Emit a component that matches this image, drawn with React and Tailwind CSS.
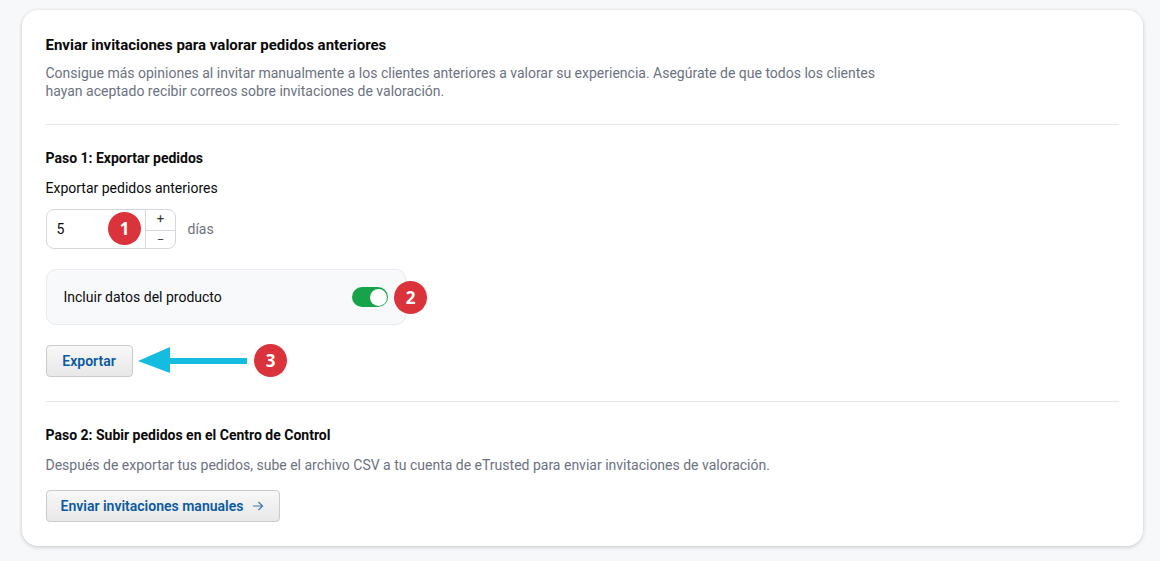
import React from "react";

const Badge = ({ n, className = "" }) => (
  <span className={"absolute flex h-[33px] w-[33px] items-center justify-center rounded-full bg-[#da333b] font-['Open_Sans',sans-serif] text-[17px] font-bold leading-none text-white " + className}>{n}</span>
);

export default function App() {
  return (
    <div className="h-[561px] w-[1160px] overflow-hidden bg-[#f7f8fa] pl-[22px] pt-[10px] font-['Roboto',sans-serif] text-[14px]">
      <div className="h-[536px] w-[1121px] rounded-[16px] bg-white px-[24px] pt-[26px] shadow-[0_1px_4px_rgba(0,0,0,0.2)]">
        <h2 className="ml-[-0.5px] text-[15px] font-bold leading-[18px] text-[#0a0a0a]">Enviar invitaciones para valorar pedidos anteriores</h2>
        <p className="ml-[-0.5px] mt-[10px] w-[850px] text-[14px] leading-[18px] text-[#6c7280]">
          Consigue más opiniones al invitar manualmente a los clientes anteriores a valorar su experiencia. Asegúrate de que todos los clientes hayan aceptado recibir correos sobre invitaciones de valoración.
        </p>
        <div className="mt-[24px] h-px bg-[#e5e7eb]" />

        <h3 className="ml-[-0.5px] mt-[24px] text-[14px] font-bold leading-[18px] text-[#0a0a0a]">Paso 1: Exportar pedidos</h3>
        <div className="ml-[-0.5px] mt-[12px] leading-[18px] text-[#0a0a0a]">Exportar pedidos anteriores</div>

        <div className="mt-[12px] flex items-center">
          <div className="relative flex h-[40px] w-[130px] rounded-[8px] border border-[#d5d8dd]">
            <div className="flex flex-1 items-center pl-[9.5px] text-[#0a0a0a]">5</div>
            <Badge n="1" className="left-[61px] top-[2px]" />
            <div className="flex w-[30px] flex-col border-l border-[#d5d8dd] text-[#333]">
              <div className="flex flex-1 items-center justify-center border-b border-[#d5d8dd] pb-[2px] text-[13px] leading-none">+</div>
              <div className="flex flex-1 items-center justify-center text-[11px] leading-none">–</div>
            </div>
          </div>
          <span className="ml-[11.5px] text-[#6c7280]">días</span>
        </div>

        <div className="relative mt-[20px] flex h-[56px] w-[360px] items-center justify-between rounded-[10px] border border-[#e8eaee] bg-[#f8f9fb] pl-[16.5px] pr-[17px]">
          <span className="text-[#0a0a0a]">Incluir datos del producto</span>
          <span className="flex h-[20px] w-[36px] items-center justify-end rounded-full bg-[#16a34a] pr-[1px]">
            <span className="h-[17px] w-[17px] rounded-full bg-white" />
          </span>
          <Badge n="2" className="left-[347px] top-[11px]" />
        </div>

        <div className="relative mt-[20px]">
          <button className="block h-[32px] w-[87px] rounded-[4px] border border-[#c9cbce] bg-gradient-to-b from-[#f8f8f8] to-[#e8e8e8] pr-px text-[14px] font-semibold text-[#0a5aa0]">Exportar</button>
          <svg className="absolute left-[92px] top-0 blur-[0.4px]" width="110" height="30" viewBox="0 0 110 30">
            <path d="M0 16 L32 2 L32 13 L109 13 L109 19 L32 19 L32 28 Z" fill="#14bde0" />
          </svg>
          <Badge n="3" className="left-[208px] top-[-1px]" />
        </div>

        <div className="mt-[24px] h-px bg-[#e5e7eb]" />

        <h3 className="ml-[-0.5px] mt-[24px] text-[14px] font-bold leading-[18px] text-[#0a0a0a]">Paso 2: Subir pedidos en el Centro de Control</h3>
        <p className="ml-[-0.5px] mt-[12px] leading-[18px] text-[#6c7280]">Después de exportar tus pedidos, sube el archivo CSV a tu cuenta de eTrusted para enviar invitaciones de valoración.</p>
        <button className="mt-[16px] flex h-[32px] w-[234px] items-center justify-center gap-[9px] rounded-[4px] border border-[#c9cbce] bg-gradient-to-b from-[#f8f8f8] to-[#e8e8e8] pr-px text-[14px] font-semibold text-[#0a5aa0]">
          Enviar invitaciones manuales
          <svg width="12" height="12" viewBox="0 0 12 12" fill="none" stroke="#3f78ad" strokeWidth="1.2">
            <path d="M1 6h9.5M6.5 2l4 4-4 4" />
          </svg>
        </button>
      </div>
    </div>
  );
}
